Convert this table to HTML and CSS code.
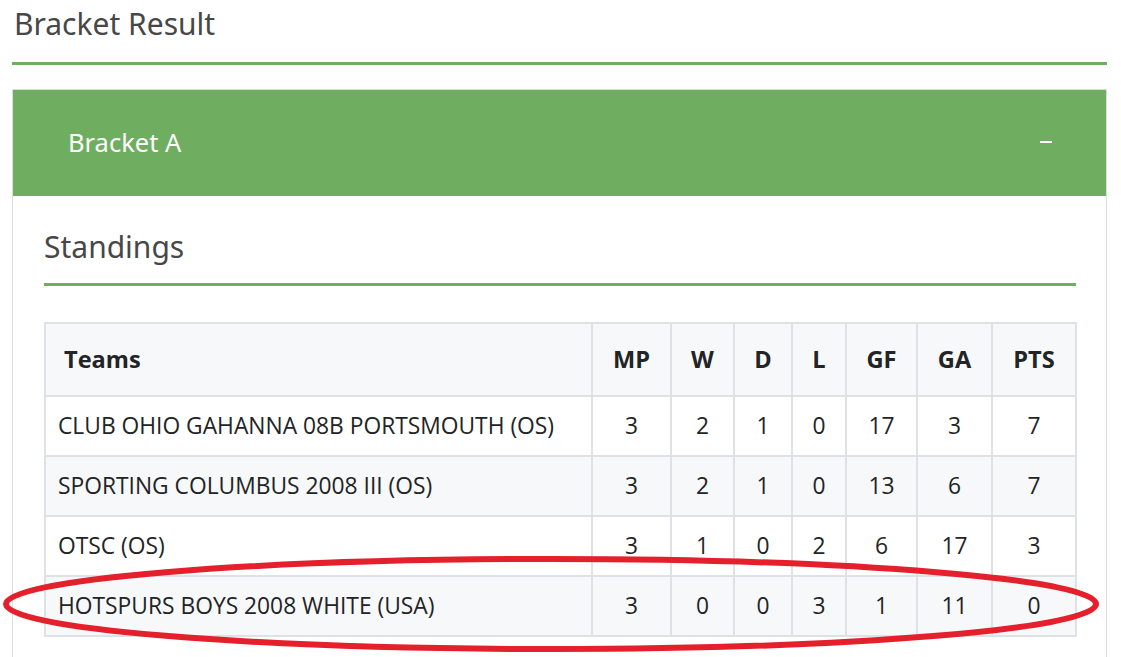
FILE: index.html
```html
<!DOCTYPE html>
<html>
<head>
<meta charset="utf-8">
<link rel="stylesheet" href="styles.css">
</head>
<body>
<div class="page">
  <h2 class="page-title">Bracket Result</h2>
  <div class="panel">
    <div class="panel-head">
      <span class="panel-title">Bracket A</span>
      <span class="toggle" aria-label="collapse"></span>
    </div>
    <div class="panel-body">
      <h3 class="section-title">Standings</h3>
      <table class="standings">
        <colgroup>
          <col class="c-team">
          <col class="c-mp">
          <col class="c-w">
          <col class="c-d">
          <col class="c-l">
          <col class="c-gf">
          <col class="c-ga">
          <col class="c-pts">
        </colgroup>
        <thead>
          <tr>
            <th class="team">Teams</th>
            <th>MP</th>
            <th>W</th>
            <th>D</th>
            <th>L</th>
            <th>GF</th>
            <th>GA</th>
            <th>PTS</th>
          </tr>
        </thead>
        <tbody>
          <tr>
            <td class="team">CLUB OHIO GAHANNA 08B PORTSMOUTH (OS)</td>
            <td>3</td><td>2</td><td>1</td><td>0</td><td>17</td><td>3</td><td>7</td>
          </tr>
          <tr class="alt">
            <td class="team">SPORTING COLUMBUS 2008 III (OS)</td>
            <td>3</td><td>2</td><td>1</td><td>0</td><td>13</td><td>6</td><td>7</td>
          </tr>
          <tr>
            <td class="team">OTSC (OS)</td>
            <td>3</td><td>1</td><td>0</td><td>2</td><td>6</td><td>17</td><td>3</td>
          </tr>
          <tr class="alt">
            <td class="team">HOTSPURS BOYS 2008 WHITE (USA)</td>
            <td>3</td><td>0</td><td>0</td><td>3</td><td>1</td><td>11</td><td>0</td>
          </tr>
        </tbody>
      </table>
    </div>
  </div>
</div>
<svg class="annotation" width="1121" height="657" viewBox="0 0 1121 657">
  <ellipse cx="551" cy="604" rx="545" ry="45" fill="none" stroke="#e3202b" stroke-width="6"/>
</svg>
</body>
</html>
```

FILE: styles.css
```css
html, body {
  margin: 0;
  padding: 0;
  background: #ffffff;
}
body {
  width: 1121px;
  height: 657px;
  overflow: hidden;
  position: relative;
  font-family: "Open Sans", "Liberation Sans", sans-serif;
}
.page {
  padding: 0 14px 0 12px;
}
.page-title {
  margin: 0;
  padding: 4px 0 0 2px;
  height: 65px;
  box-sizing: border-box;
  font-family: "Noto Sans", "Open Sans", sans-serif;
  font-weight: 400;
  font-size: 30px;
  line-height: 40px;
  color: #474747;
  border-bottom: 3px solid #6fae60;
}
.panel {
  margin-top: 24px;
  border: 1px solid #dddddd;
  border-bottom: none;
  height: 600px;
}
.panel-head {
  background: #6fae60;
  height: 106px;
  display: flex;
  align-items: center;
  justify-content: space-between;
  padding: 0 54px 0 55px;
}
.panel-title {
  font-family: "Noto Sans", "Open Sans", sans-serif;
  font-size: 25.5px;
  color: #ffffff;
  padding-bottom: 2px;
}
.toggle {
  display: block;
  width: 12px;
  height: 2px;
  background: #ffffff;
  margin-bottom: 2px;
}
.panel-body {
  padding: 0 30px 0 31px;
}
.section-title {
  margin: 0;
  padding-top: 31px;
  height: 90px;
  box-sizing: border-box;
  font-family: "Noto Sans", "Open Sans", sans-serif;
  font-weight: 400;
  font-size: 30px;
  line-height: 40px;
  color: #474747;
  border-bottom: 3px solid #6fae60;
  width: 1032px;
}
.standings {
  margin-top: 36px;
  border-collapse: collapse;
  width: 1031px;
  table-layout: fixed;
  color: #222426;
  font-size: 22.8px;
}
.standings th,
.standings td {
  border: 2px solid #dfe2e5;
  text-align: center;
  line-height: 30px;
  padding: 14px 0;
  white-space: nowrap;
}
.standings th {
  background: #f7f8f9;
  font-weight: 700;
  font-size: 23.6px;
  padding: 20px 0 21px;
}
.standings th.team {
  text-align: left;
  padding-left: 18px;
}
.standings td.team {
  text-align: left;
  padding-left: 12px;
}
.standings tr.alt td {
  background: #f7f8f9;
}
.c-team { width: 547px; }
.c-mp { width: 79px; }
.c-w { width: 63px; }
.c-d { width: 58px; }
.c-l { width: 54px; }
.c-gf { width: 71px; }
.c-ga { width: 75px; }
.c-pts { width: 84px; }
.annotation {
  position: absolute;
  top: 0;
  left: 0;
  pointer-events: none;
}
```
